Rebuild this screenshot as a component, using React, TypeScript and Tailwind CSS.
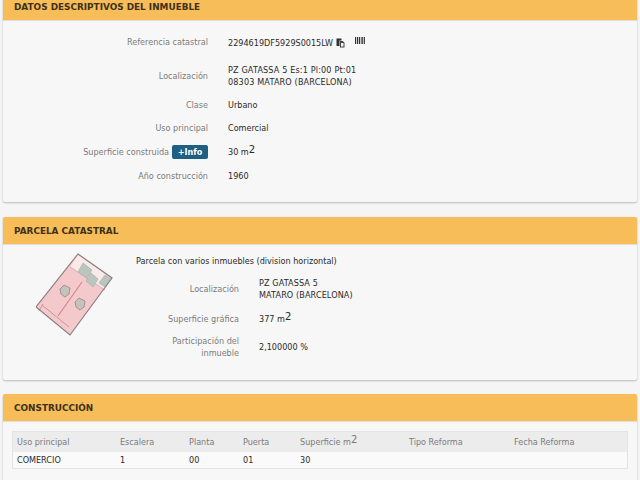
import React from 'react';

const FONT = "font-['DejaVu_Sans',sans-serif]";

const Panel: React.FC<{ title: string; children: React.ReactNode; className?: string }> = ({ title, children, className }) => (
  <section className={`mx-[3px] bg-[#f7f7f7] rounded-[2px] shadow-[0_1px_2px_rgba(0,0,0,0.25)] ${className ?? ''}`}>
    <div className="h-[27px] flex items-center pl-[11px] pt-[2px] bg-[#f6bd58] rounded-t-[2px] shadow-[0_1px_1px_rgba(0,0,0,0.1)]">
      <h2 className="text-[8.9px] font-bold text-[#3f3018]">{title}</h2>
    </div>
    {children}
  </section>
);

const Row: React.FC<{ label: React.ReactNode; labelWidth: number; children: React.ReactNode; className?: string }> = ({ label, labelWidth, children, className }) => (
  <div className={`flex items-center ${className ?? ''}`}>
    <div className="shrink-0 text-right text-[#7b7b7b] leading-[12px]" style={{ width: labelWidth }}>{label}</div>
    <div className="ml-5 text-[#2a2a2a] leading-[12px]">{children}</div>
  </div>
);

const Sup = () => <sup className="text-[10px] leading-none relative -top-[2px] align-baseline">2</sup>;

const CopyIcon = () => (
  <svg width="9" height="10" viewBox="0 0 9 10" className="ml-[3px] mt-[1px]">
    <path d="M0.5 0.5h5v2h-2v5.5h-3z" fill="#333" />
    <path d="M4 3h2.8l1.7 1.8v4.7H4z" fill="#444" />
    <path d="M5 5h2.5v3.5H5z" fill="#f7f7f7" />
  </svg>
);

const BarcodeIcon = () => (
  <svg width="10" height="8" viewBox="0 0 10 8" className="ml-[10px] -mt-[2px]">
    <path d="M0 0h1.2v7H0zM2 0h1v7H2zM3.8 0h1.2v7H3.8zM5.8 0h.8v7h-.8zM7.2 0h1v7h-1zM8.9 0h1v7h-1z" fill="#333" />
  </svg>
);

const ParcelDrawing = () => (
  <svg width="78" height="84" viewBox="0 0 78 84" className="shrink-0">
    <polygon points="42,2 76,26 34,83 0,55" fill="#f3c9cb" />
    <polygon points="42,2 76,26 69,38 34,15" fill="#f9e9e9" />
    <path d="M34 15 L69 38" stroke="#d9a0a4" strokeWidth="0.8" fill="none" />
    <polygon points="47,11 56,18 51,26 42,20" fill="#b9c6bd" stroke="#a8aaa6" strokeWidth="0.6" />
    <polygon points="55,21 62,27 57,35 50,29" fill="#b9c6bd" stroke="#a8aaa6" strokeWidth="0.6" />
    <polygon points="69,23 75,27 69,35 63,31" fill="#b9c6bd" stroke="#a8aaa6" strokeWidth="0.6" />
    <path d="M28 33 L34 36 L33 42 L29 45 L25 42 L24 37 Z" fill="#c4c4bc" stroke="#9b8085" strokeWidth="0.8" />
    <path d="M43 46 L49 49 L48 55 L44 58 L40 55 L39 50 Z" fill="#c4c4bc" stroke="#9b8085" strokeWidth="0.8" />
    <path d="M46 30 L22 64" stroke="#d98088" strokeWidth="1.1" fill="none" />
    <path d="M6 53 L33 75 M3 59 L7 52" stroke="#c98d92" strokeWidth="0.9" fill="none" />
    <polygon points="42,2 76,26 34,83 0,55" fill="none" stroke="#8b7d80" strokeWidth="1.2" />
  </svg>
);

const COLUMNS = [
  { label: 'Uso principal', value: 'COMERCIO', w: 'w-[103px]' },
  { label: 'Escalera', value: '1', w: 'w-[69px]' },
  { label: 'Planta', value: '00', w: 'w-[54px]' },
  { label: 'Puerta', value: '01', w: 'w-[57px]' },
  { label: 'Superficie m', value: '30', w: 'w-[109px]', sup: true },
  { label: 'Tipo Reforma', value: '', w: 'w-[105px]' },
  { label: 'Fecha Reforma', value: '', w: 'w-[109px]' },
];

export default function App() {
  return (
    <div className={`h-[480px] w-[640px] overflow-hidden bg-[#f5f5f5] text-[8.1px] ${FONT}`}>
      <div className="-mt-[7px]">
        <Panel title="DATOS DESCRIPTIVOS DEL INMUEBLE">
          <div className="h-[182px] pt-[14px]">
            <Row label="Referencia catastral" labelWidth={205} className="h-[16px]">
              <div className="flex items-center">
                <span className="mt-[2px]">2294619DF5929S0015LW</span>
                <CopyIcon />
                <BarcodeIcon />
              </div>
            </Row>
            <Row label="Localización" labelWidth={205} className="h-[24px] mt-[14px]">
              <span className="tracking-[0.15px]">PZ GATASSA 5 Es:1 Pl:00 Pt:01<br />08303 MATARO (BARCELONA)</span>
            </Row>
            <Row label="Clase" labelWidth={205} className="h-[16px] mt-[9px]">Urbano</Row>
            <Row label="Uso principal" labelWidth={205} className="h-[16px] mt-[7px]">Comercial</Row>
            <Row
              labelWidth={205}
              className="h-[16px] mt-[8px]"
              label={
                <span className="inline-flex items-center justify-end">
                  Superficie construida
                  <span className="ml-[3px] h-[14px] w-[36px] rounded-[2px] bg-[#1f5f82] text-white font-bold flex items-center justify-center">+Info</span>
                </span>
              }
            >
              30 m<Sup />
            </Row>
            <Row label="Año construcción" labelWidth={205} className="h-[16px] mt-[8px]">1960</Row>
          </div>
        </Panel>

        <Panel title="PARCELA CATASTRAL" className="mt-[15px]">
          <div className="h-[136px] flex pl-[33px] pt-[8px]">
            <ParcelDrawing />
            <div className="ml-[22px] pt-[3px]">
              <p className="text-[#2a2a2a] leading-[12px]">Parcela con varios inmuebles (division horizontal)</p>
              <Row label="Localización" labelWidth={103} className="h-[24px] mt-[10px]">
                <span className="tracking-[0.1px]">PZ GATASSA 5<br />MATARO (BARCELONA)</span>
              </Row>
              <Row label="Superficie gráfica" labelWidth={103} className="h-[16px] mt-[10px]">
                377 m<Sup />
              </Row>
              <Row label={<>Participación del<br />inmueble</>} labelWidth={103} className="h-[32px] mt-[4px]">
                2,100000 %
              </Row>
            </div>
          </div>
        </Panel>

        <Panel title="CONSTRUCCIÓN" className="mt-[14px]">
          <div className="pt-[10px] px-[9px] h-[60px]">
            <div className="border border-[#e4e4e4] bg-[#fafafa]">
              <div className="flex h-[20px] items-center bg-[#ececec] pl-[4px] text-[#7b7b7b]">
                {COLUMNS.map((c) => (
                  <div key={c.label} className={`${c.w} shrink-0`}>
                    {c.label}
                    {c.sup && <Sup />}
                  </div>
                ))}
              </div>
              <div className="flex h-[16px] items-center pl-[4px] text-[#2a2a2a]">
                {COLUMNS.map((c) => (
                  <div key={c.label} className={`${c.w} shrink-0`}>{c.value}</div>
                ))}
              </div>
            </div>
          </div>
        </Panel>
      </div>
    </div>
  );
}
